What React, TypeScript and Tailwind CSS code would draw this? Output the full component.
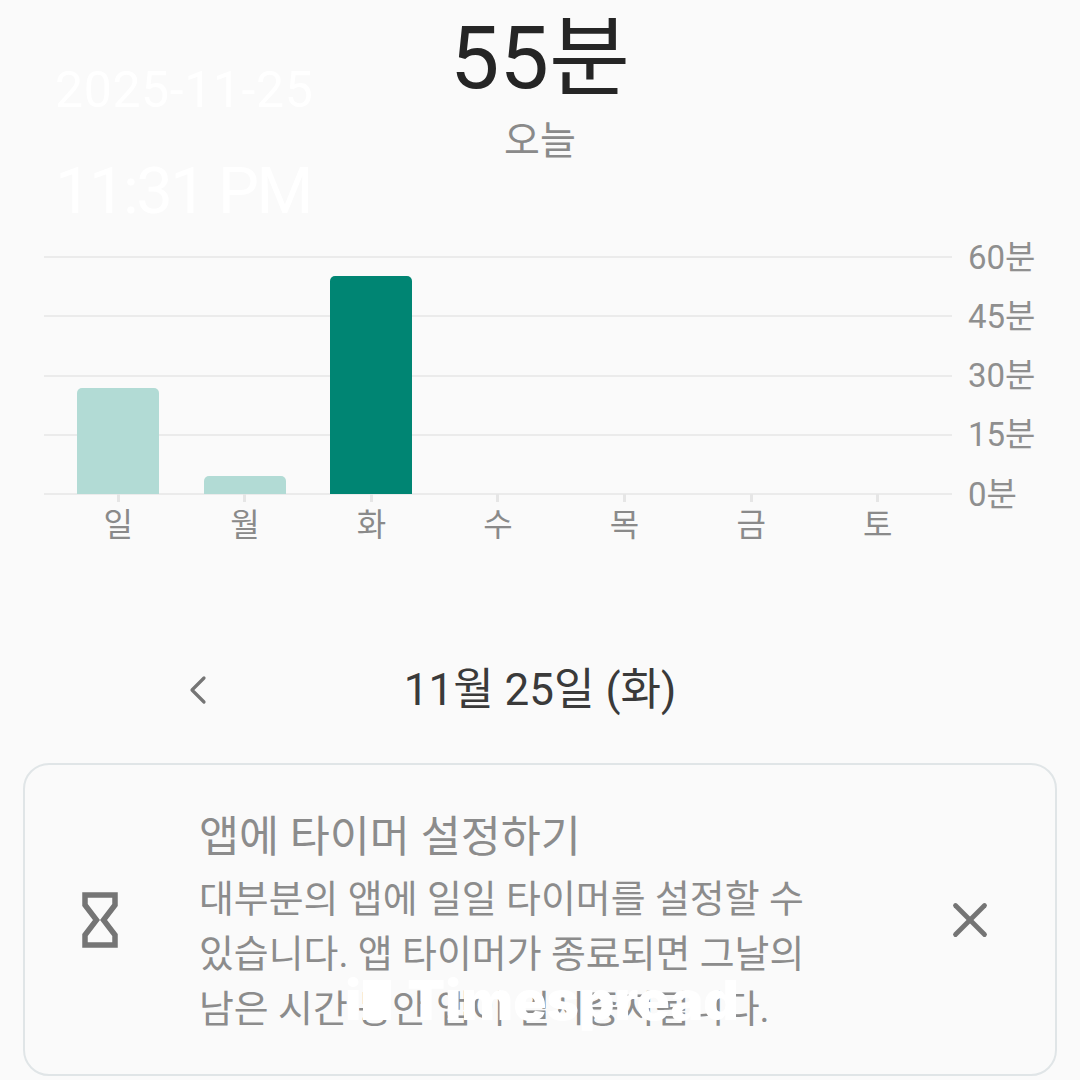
import { ChevronLeft, X } from 'lucide-react';

const days = [
    { label: '일', height: 106, color: 'bg-[#b2dbd5]' },
    { label: '월', height: 18, color: 'bg-[#b2dbd5]' },
    { label: '화', height: 218, color: 'bg-[#008573]' },
    { label: '수', height: 0, color: '' },
    { label: '목', height: 0, color: '' },
    { label: '금', height: 0, color: '' },
    { label: '토', height: 0, color: '' },
];

const ticks = ['60분', '45분', '30분', '15분', '0분'];

function Hourglass() {
    return (
        <svg width="36" height="56" viewBox="0 0 36 56" fill="none" stroke="#757575" strokeWidth="5.5">
            <path d="M3 3H33V13L21.5 28L33 43V53H3V43L14.5 28L3 13Z" strokeLinejoin="miter" />
        </svg>
    );
}

export default function App() {
    return (
        <div className="relative w-[1080px] h-[1080px] overflow-hidden bg-[#fafafa] font-['Roboto','Noto_Sans_CJK_KR',sans-serif]">
            {/* Summary */}
            <div className="flex flex-col items-center h-[256px]">
                <p className="mt-[6px] text-[88px] leading-[104px] text-[#252525]">55분</p>
                <p className="mt-[6px] text-[39px] leading-[50px] text-[#8a8a8a]">오늘</p>
            </div>

            {/* Chart */}
            <div className="relative ml-[44px] w-[1000px] h-[290px]">
                <div className="flex flex-col gap-[57.25px]">
                    {ticks.map((tick) => (
                        <div key={tick} className="flex items-center h-[2px] gap-4">
                            <div className="w-[908px] h-[2px] bg-[#ebebeb]" />
                            <span className="text-[33px] leading-none text-[#8f8f8f]">{tick}</span>
                        </div>
                    ))}
                </div>
                <div className="absolute left-[11px] top-0 w-[886px] grid grid-cols-7">
                    {days.map((day) => (
                        <div key={day.label} className="flex flex-col items-center">
                            <div className="flex items-end h-[238px]">
                                <div
                                    className={`w-[82px] rounded-t-[5px] ${day.color}`}
                                    style={{ height: day.height }}
                                />
                            </div>
                            <div className="w-[3px] h-[8px] bg-[#e6e6e6]" />
                            <span className="mt-[1px] text-[32px] leading-[44px] text-[#8a8a8a]">{day.label}</span>
                        </div>
                    ))}
                </div>
            </div>

            {/* Date navigation */}
            <div className="relative flex justify-center items-center mt-[116px] h-[56px]">
                <ChevronLeft className="absolute left-[174px] text-[#757575]" size={48} strokeWidth={1.6} />
                <span className="text-[44px] leading-none text-[#3a3a3a]">11월 25일 (화)</span>
            </div>

            {/* Timer card */}
            <div className="flex items-center mt-[45px] mx-[23px] h-[313px] rounded-[26px] border-2 border-[#e0e5e7]">
                <div className="flex justify-center w-[150px]">
                    <Hourglass />
                </div>
                <div className="w-[640px] ml-[24px] pt-[5px]">
                    <p className="text-[43.5px] leading-[60px] text-[#8c8c8c]">앱에 타이머 설정하기</p>
                    <p className="mt-1 text-[37.9px] leading-[55px] text-[#8c8c8c]">
                        대부분의 앱에 일일 타이머를 설정할 수<br />
                        있습니다. 앱 타이머가 종료되면 그날의<br />
                        남은 시간 동안 앱이 일시중지됩니다.
                    </p>
                </div>
                <X className="ml-[102px] text-[#757575]" size={58} strokeWidth={2} />
            </div>

            {/* Watermarks */}
            <div className="absolute left-[55px] top-[60px] text-[50px] leading-[60px] tracking-[0.6px] text-[#ffffff]">2025-11-25</div>
            <div className="absolute left-[55px] top-[155px] text-[65px] leading-[72px] tracking-[-2.5px] text-[#ffffff]">11:31 PM</div>
            <div className="absolute left-[345px] top-[968px] flex items-center h-[64px] font-['Inter',sans-serif] font-black text-[55px] leading-none text-[#ffffff]">
                <span>i</span>
                <div className="ml-[2px] w-[28px] h-[40px] bg-[#ffffff]" />
                <span className="ml-[16px]">Timespread</span>
            </div>
        </div>
    );
}
